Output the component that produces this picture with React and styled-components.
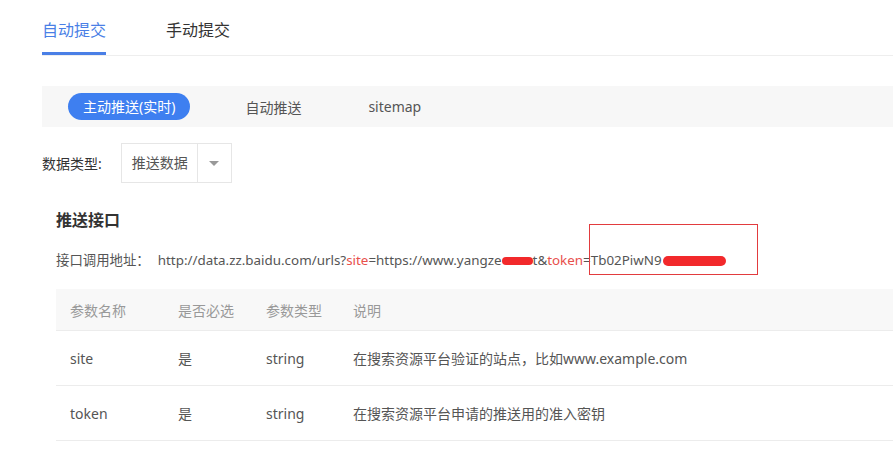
import React from "react";
import styled, { createGlobalStyle } from "styled-components";

const Global = createGlobalStyle`
  html, body { margin: 0; padding: 0; background: #fff; }
  body {
    font-family: "Noto Sans", "Noto Sans CJK SC", sans-serif;
    color: #333;
  }
  * { box-sizing: border-box; }
`;

const Page = styled.div`
  position: relative;
  width: 893px;
  height: 450px;
  overflow: hidden;
  padding-left: 42px;
`;

const TabBar = styled.div`
  display: flex;
  gap: 60px;
  height: 56px;
  border-bottom: 1px solid #eeeeee;
`;

const Tab = styled.div`
  height: 55px;
  padding-top: 18px;
  font-size: 16px;
  line-height: 24px;
  color: ${(p) => (p.$active ? "#4a7fe6" : "#333")};
  border-bottom: 3px solid ${(p) => (p.$active ? "#4a7fe6" : "transparent")};
`;

const SubNav = styled.div`
  margin-top: 30px;
  height: 41px;
  background: #f7f7f7;
  display: flex;
  align-items: center;
  padding-left: 26px;
  gap: 55px;
`;

const Pill = styled.div`
  height: 27px;
  padding: 0 15px;
  border-radius: 14px;
  background: #3e7ff0;
  color: #fff;
  font-size: 14px;
  line-height: 27px;
`;

const NavItem = styled.div`
  font-size: 14px;
  color: #555;
  margin-left: ${(p) => p.$ml || 0}px;
`;

const FilterRow = styled.div`
  margin-top: 16px;
  display: flex;
  align-items: center;
  gap: 19px;
`;

const Label = styled.div`
  font-size: 14px;
  color: #333;
`;

const Select = styled.div`
  display: flex;
  height: 40px;
  border: 1px solid #e6e6e6;
`;

const SelectValue = styled.div`
  width: 76px;
  padding-left: 10px;
  font-size: 14px;
  line-height: 38px;
  color: #555;
  border-right: 1px solid #e6e6e6;
`;

const SelectArrow = styled.div`
  width: 33px;
  display: flex;
  align-items: center;
  justify-content: center;
  &::after {
    content: "";
    border-left: 5px solid transparent;
    border-right: 5px solid transparent;
    border-top: 5px solid #999;
  }
`;

const Section = styled.div`
  padding-left: 14px;
`;

const Heading = styled.h3`
  margin: 25px 0 0;
  font-size: 16px;
  line-height: 24px;
  font-weight: bold;
  color: #333;
`;

const UrlLine = styled.div`
  position: relative;
  margin-top: 18px;
  font-size: 13.4px;
  line-height: 20px;
  color: #555;
  white-space: nowrap;
`;

const UrlLabel = styled.span`
  margin-right: 8px;
`;

const Param = styled.span`
  color: #e8504c;
`;

const Scribble = styled.span`
  display: inline-block;
  height: ${(p) => p.$h}px;
  width: ${(p) => p.$w}px;
  background: #f2292b;
  border-radius: 6px;
  vertical-align: middle;
  margin-left: ${(p) => p.$m || 0}px;
`;

const HighlightBox = styled.div`
  position: absolute;
  left: 533px;
  top: -26px;
  width: 169px;
  height: 51px;
  border: 1px solid #e23b3e;
  pointer-events: none;
`;

const Table = styled.div`
  margin-top: 19px;
  width: 837px;
`;

const Row = styled.div`
  display: grid;
  grid-template-columns: 108px 88px 87px 1fr;
  align-items: center;
  height: ${(p) => (p.$head ? 42 : 55)}px;
  padding-left: 14px;
  background: ${(p) => (p.$head ? "#f8f8f8" : "#fff")};
  border-bottom: 1px solid #ececec;
  font-size: 14px;
  color: ${(p) => (p.$head ? "#999" : "#555")};
`;

const Cell = styled.div`
  white-space: nowrap;
`;

export default function App() {
  return (
    <>
      <Global />
      <Page>
        <TabBar>
          <Tab $active>自动提交</Tab>
          <Tab>手动提交</Tab>
        </TabBar>
        <SubNav>
          <Pill>主动推送(实时)</Pill>
          <NavItem>自动推送</NavItem>
          <NavItem $ml={12}>sitemap</NavItem>
        </SubNav>
        <FilterRow>
          <Label>数据类型:</Label>
          <Select>
            <SelectValue>推送数据</SelectValue>
            <SelectArrow />
          </Select>
        </FilterRow>
        <Section>
          <Heading>推送接口</Heading>
          <UrlLine>
            <UrlLabel>接口调用地址：</UrlLabel>
            http://data.zz.baidu.com/urls?<Param>site</Param>=https://www.yangze
            <Scribble $w={31} $h={8} />
            t&amp;<Param>token</Param>=Tb02PiwN9
            <Scribble $w={63} $h={10} $m={1} />
            <HighlightBox />
          </UrlLine>
          <Table>
            <Row $head>
              <Cell>参数名称</Cell>
              <Cell>是否必选</Cell>
              <Cell>参数类型</Cell>
              <Cell>说明</Cell>
            </Row>
            <Row>
              <Cell>site</Cell>
              <Cell>是</Cell>
              <Cell>string</Cell>
              <Cell>在搜索资源平台验证的站点，比如www.example.com</Cell>
            </Row>
            <Row>
              <Cell>token</Cell>
              <Cell>是</Cell>
              <Cell>string</Cell>
              <Cell>在搜索资源平台申请的推送用的准入密钥</Cell>
            </Row>
          </Table>
        </Section>
      </Page>
    </>
  );
}
